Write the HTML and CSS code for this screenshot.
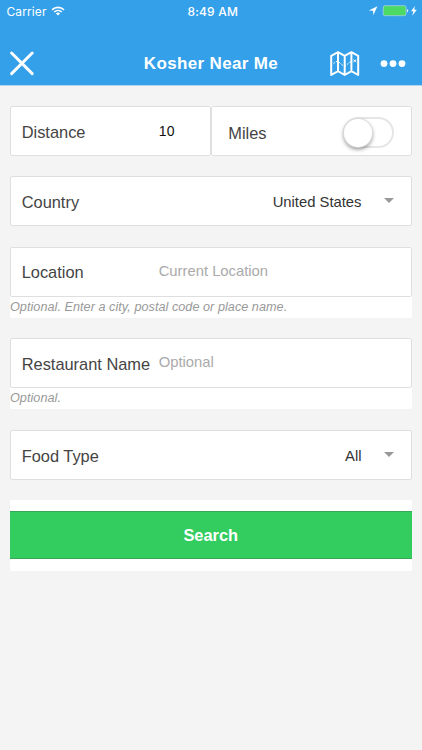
FILE: index.html
```html
<!DOCTYPE html>
<html lang="en">
<head>
<meta charset="utf-8">
<title>Kosher Near Me</title>
<link rel="stylesheet" href="styles.css">
</head>
<body>
<header class="header">
  <div class="status">
    <div class="status-left">
      <span class="carrier">Carrier</span>
      <svg class="wifi" width="14" height="10" viewBox="0 0 14 10" fill="none" stroke="#fff" stroke-width="1.6">
        <path d="M1 3.8a8.7 8.7 0 0 1 12 0"/>
        <path d="M3.2 6a5.5 5.5 0 0 1 7.6 0"/>
        <path d="M7 9.6 4.9 7.5a3 3 0 0 1 4.2 0z" fill="#fff" stroke="none"/>
      </svg>
    </div>
    <span class="time">8:49 AM</span>
    <div class="status-right">
      <svg width="50" height="12" viewBox="0 0 50 12">
        <path d="M9.4 1.2 0.8 5.5l4.3.3.2 4.4z" fill="#fff"/>
        <rect x="15.2" y=".7" width="22.8" height="10" rx="1.6" fill="#4cd964" stroke="#a3d3e4" stroke-width=".8"/>
        <path d="M39.1 4a2 2 0 0 1 0 3.6z" fill="#fff"/>
        <path d="M46.9 1 43.1 6.3h2.3l-1.2 4.4 4.6-5.9h-2.5z" fill="#fff"/>
      </svg>
    </div>
  </div>
  <nav class="nav">
    <svg class="close" width="26" height="26" viewBox="0 0 26 26" stroke="#fff" stroke-width="2.9" stroke-linecap="round"><path d="M2.6 2 23.2 22.6M23.2 2 2.6 22.6"/></svg>
    <h1 class="title">Kosher Near Me</h1>
    <div class="actions">
      <svg width="30" height="26" viewBox="0 0 30 26" fill="none" stroke="#fff" stroke-width="2" stroke-linejoin="round">
        <path d="M1.2 4.8 8 1.2l6.7 3.6 6.7-3.6 6.8 3.6v19.2l-6.8-3.8-6.7 3.8-6.7-3.8-6.8 3.8zM8 1.2v19M14.7 4.8v19.2M21.4 1.2v19"/>
        <path d="M3.5 12.6 6 10.4l3 .8 3.6 3 3 .6 3.6-3.2 3-1.8" stroke-width="1" stroke-dasharray="2 1.2"/>
        <path d="m23.4 8.7 2.8 2.2m0-2.2-2.8 2.2" stroke-width="1"/>
      </svg>
      <svg width="26" height="8" viewBox="0 0 26 8" fill="#fff"><circle cx="4" cy="3.6" r="3.4"/><circle cx="13" cy="3.6" r="3.4"/><circle cx="22" cy="3.6" r="3.4"/></svg>
    </div>
  </nav>
</header>
<main class="form">
  <section class="group">
    <div class="split">
      <div class="field"><span class="label">Distance</span><span class="value number">10</span></div>
      <div class="field miles"><span class="label">Miles</span><span class="toggle"><span class="knob"></span></span></div>
    </div>
  </section>
  <section class="group">
    <div class="field select"><span class="label">Country</span><span class="value">United States</span><span class="caret"></span></div>
  </section>
  <section class="group">
    <div class="field"><span class="label">Location</span><span class="value placeholder">Current Location</span></div>
    <p class="hint">Optional. Enter a city, postal code or place name.</p>
  </section>
  <section class="group">
    <div class="field"><span class="label">Restaurant Name</span><span class="value placeholder">Optional</span></div>
    <p class="hint">Optional.</p>
  </section>
  <section class="group">
    <div class="field select"><span class="label">Food Type</span><span class="value">All</span><span class="caret"></span></div>
  </section>
  <section class="group submit">
    <button class="search" type="button">Search</button>
  </section>
</main>
</body>
</html>
```
FILE: styles.css
```css
* { box-sizing: border-box; }
body {
  margin: 0;
  min-height: 750px;
  background: #f4f4f4;
  font-family: "Liberation Sans", Arial, sans-serif;
  color: #444;
}
.header {
  height: 86px;
  background: #33a0e9;
  border-bottom: 1px solid #b4d4eb;
  color: #fff;
}
.status {
  display: grid;
  grid-template-columns: 1fr auto 1fr;
  align-items: center;
  height: 22px;
  padding: 0 4px 0 6.5px;
  font-family: Inter, Roboto, sans-serif;
  font-size: 12px;
}
.status-left { display: flex; align-items: center; gap: 4.5px; }
.carrier { letter-spacing: .1px; }
.time { margin-left: 1px; font-weight: 500; letter-spacing: .2px; }
.status-right { display: flex; justify-content: flex-end; }
.status-right svg { display: block; }
.nav {
  display: grid;
  grid-template-columns: 1fr auto 1fr;
  align-items: center;
  height: 63px;
  padding: 20px 16px 0 9px;
}
.nav svg { display: block; }
.title {
  margin: 0;
  padding: 1px 0 0 7px;
  font-size: 17px;
  line-height: 24px;
  letter-spacing: .35px;
}
.actions { display: flex; align-items: center; justify-content: flex-end; gap: 20px; }
.form {
  display: flex;
  flex-direction: column;
  gap: 20.4px;
  padding: 20px 10.5px 0 10px;
}
.group { background: #fff; border-radius: 2px; }
.split { display: grid; grid-template-columns: 1fr 1fr; }
.field {
  display: flex;
  align-items: center;
  height: 50px;
  padding: 0 11px 0 10.7px;
  border: 1px solid #dfdfdf;
  border-radius: 2px;
}
.label {
  flex: none;
  width: 137px;
  padding-top: 2px;
  font-size: 16.4px;
  white-space: nowrap;
}
.value { font-size: 14.8px; color: #333; }
.number { color: #111; font-size: 14px; letter-spacing: .3px; padding-bottom: 1px; }
.placeholder { color: #aaa; padding-bottom: 2px; }
.miles { justify-content: space-between; padding: 0 17px 0 16.5px; }
.miles .label { width: auto; padding-top: 5px; }
.toggle {
  display: flex;
  align-items: center;
  width: 51px;
  height: 31px;
  border: 2px solid #e6e6e6;
  border-radius: 16px;
  margin-top: 3px;
}
.knob {
  flex: none;
  width: 28px;
  height: 28px;
  margin-left: -1px;
  border-radius: 50%;
  background: #fff;
  box-shadow: 0 0 1px 1px #ddd, 0 2px 4px rgba(0, 0, 0, .5);
}
.select .label { padding-top: 3px; }
.select .value { margin-left: auto; padding-top: 2px; }
.caret {
  margin: -1px 6px 0 22px;
  border: 5px solid transparent;
  border-top: 5px solid #999;
  border-bottom: 0;
}
.hint {
  margin: 0;
  height: 21px;
  font-size: 12.65px;
  letter-spacing: .04px;
  font-style: italic;
  line-height: 21px;
  color: #999;
}
.submit { padding: 11px 0 12px; }
.search {
  display: block;
  width: 100%;
  height: 48px;
  padding: 2px 0 0;
  border: solid #36a957;
  border-width: 1px 0;
  background: #33cd5f;
  color: #fff;
  font: bold 16.4px "Liberation Sans", Arial, sans-serif;
}
```
